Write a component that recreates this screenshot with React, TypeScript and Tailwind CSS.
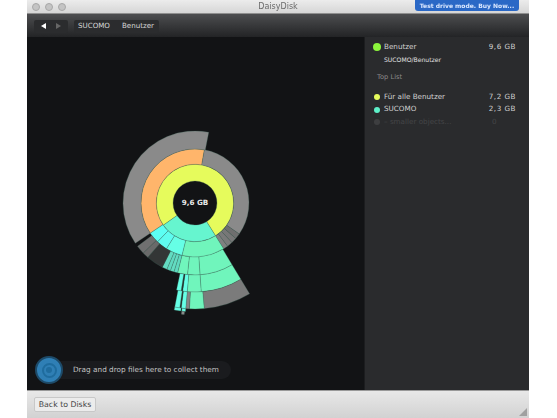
const GRAY = "#8a8a8a";
const TEAL = "#70f5bc";
const CYAN = "#66ffe6";

// clockwise degrees from 12 o'clock
function wedge(r0: number, r1: number, a0: number, a1: number) {
  const pt = (r: number, a: number) => {
    const t = (a * Math.PI) / 180;
    return `${(120 + r * Math.sin(t)).toFixed(2)} ${(120 - r * Math.cos(t)).toFixed(2)}`;
  };
  const large = a1 - a0 > 180 ? 1 : 0;
  return `M${pt(r0, a0)} A${r0} ${r0} 0 ${large} 1 ${pt(r0, a1)} L${pt(r1, a1)} A${r1} ${r1} 0 ${large} 0 ${pt(r1, a0)} Z`;
}

const sectors: [number, number, number, number, string][] = [
  // ring 1
  [22, 38.7, -125, 148, "#e6fb5c"],
  [22, 38.7, 148, 235, "#66f5cf"],
  // ring 2
  [38.7, 54, -124, 10, "#ffb56b"],
  [38.7, 54, 10, 125, GRAY],
  [38.7, 54, 125, 131, "#6f6f6f"],
  [38.7, 54, 131, 137, "#777777"],
  [38.7, 54, 137, 143, "#7a7a7a"],
  [38.7, 54, 143, 148, "#808080"],
  [38.7, 54, 148, 194, TEAL],
  [38.7, 54, 194, 212, CYAN],
  [38.7, 54, 212, 224, "#5ffcf0"],
  [38.7, 54, 224, 236, "#5cfff4"],
  // ring 3
  [54, 72, -124, 11, GRAY],
  [54, 72, 149, 176, TEAL],
  [54, 72, 176, 186, TEAL],
  [54, 72, 186, 194, TEAL],
  [54, 72, 194, 197, "#5fd9c0"],
  [54, 72, 197, 200, "#63dcc2"],
  [54, 72, 200, 203, "#5fd9c0"],
  [54, 72, 203, 207, "#63dcc2"],
  [54, 72, 207, 221, "#333636"],
  [54, 72, 221, 226, "#6a6a6a"],
  [54, 72, 226, 233, "#707070"],
  // ring 4
  [72, 89, 149, 176, TEAL],
  [72, 89, 176, 185, TEAL],
  [72, 89, 185, 188, CYAN],
  [72, 89, 188, 189, "#1e2a28"],
  [72, 89, 189, 192, CYAN],
  // ring 5
  [89, 106, 149, 175, "#7b7b7b"],
  [89, 106, 175, 183, TEAL],
  [89, 106, 183, 185, "#858585"],
  [89, 106, 185, 187.5, CYAN],
  [89, 106, 187.5, 188.3, "#1e2a28"],
  [89, 106, 188.3, 191, CYAN],
  // crumbs at the tip
  [106, 109, 185, 187, CYAN],
  [106, 109, 187.5, 191, CYAN],
  [109, 112, 185.5, 187, "#8a8a8a"],
];

function Row({ dot, name, size, big, dim }: { dot: string; name: string; size: string; big?: boolean; dim?: boolean }) {
  return (
    <div className={`flex h-[10px] items-center justify-between pr-[13px] ${dim ? "opacity-15" : ""}`}>
      <div className="flex items-center">
        <span
          className={`rounded-full ${big ? "w-[8px] h-[8px] mr-[3px]" : "w-[6px] h-[6px] ml-[1px] mr-[4px]"}`}
          style={{ backgroundColor: dot }}
        />
        <span>{name}</span>
      </div>
      <span className={`tracking-[0.5px] ${dim ? "mr-[19px]" : ""}`}>{size}</span>
    </div>
  );
}

export default function App() {
  return (
    <div className="h-[418px] w-[557px] bg-white overflow-hidden font-['DejaVu_Sans',sans-serif]">
      <div className="ml-[27px] w-[502px] h-full flex flex-col blur-[0.55px]">
        {/* title bar */}
        <div className="relative h-[14px] shrink-0 flex items-center justify-between bg-gradient-to-b from-[#ececec] to-[#d6d6d6] border-b border-[#8f8f8f]">
          <div className="flex gap-[5px] ml-[5px]">
            <span className="w-[8px] h-[8px] rounded-full bg-[#c4c4c4] border border-[#a8a8a8]" />
            <span className="w-[8px] h-[8px] rounded-full bg-[#c4c4c4] border border-[#a8a8a8]" />
            <span className="w-[8px] h-[8px] rounded-full bg-[#c4c4c4] border border-[#a8a8a8]" />
          </div>
          <span className="absolute inset-x-0 text-center text-[8px] leading-[13px] text-[#6a6a6a]">DaisyDisk</span>
          <button className="relative h-[11px] w-[104px] mr-[10px] mb-[3px] rounded-b-[3px] bg-[#2a68c6] text-[6px] leading-[11px] font-bold text-[#dbe8ff] whitespace-nowrap">
            Test drive mode. Buy Now...
          </button>
        </div>

        {/* toolbar */}
        <div className="h-[23px] shrink-0 flex items-center pl-[7px] pt-[1px] bg-gradient-to-b from-[#4d4e50] to-[#232426] text-[7.1px] text-[#d8d8d8]">
          <div className="flex items-center h-[13px] w-[34px] rounded-[2px] bg-[#2b2c2e]">
            <span className="ml-[7px] w-0 h-0 border-y-[3px] border-y-transparent border-r-[5px] border-r-white" />
            <span className="ml-[10px] w-0 h-0 border-y-[3px] border-y-transparent border-l-[5px] border-l-[#666]" />
          </div>
          <div className="flex items-center h-[13px] w-[85px] ml-[6px] pl-[4px] rounded-[2px] bg-[#2b2c2e]">
            <span>SUCOMO</span>
            <span className="ml-[12px]">Benutzer</span>
          </div>
        </div>

        <div className="flex-1 min-h-0 flex">
          {/* chart pane */}
          <div className="w-[337px] flex flex-col items-center bg-[#121315]">
            <div className="relative mt-[46px] -ml-[1px] w-[240px] h-[240px]">
              <svg viewBox="0 0 240 240" className="w-full h-full">
                {sectors.map(([r0, r1, a0, a1, fill], i) => (
                  <path key={i} d={wedge(r0, r1, a0, a1)} fill={fill} stroke="#3f6a5c" strokeOpacity="0.7" strokeWidth="0.4" />
                ))}
              </svg>
              <span className="absolute inset-0 flex items-center justify-center text-[7.2px] font-bold text-[#e8e8e8]">
                9,6 GB
              </span>
            </div>
            <div className="mt-auto mb-[6px] self-start ml-[8px] flex items-center">
              <div className="relative z-10 w-[28px] h-[28px] rounded-full bg-[#2f7fb5] flex items-center justify-center border-2 border-[#1d4a68]">
                <div className="w-[15px] h-[15px] rounded-full border-[2px] border-[#1f6c9e] flex items-center justify-center">
                  <div className="w-[6px] h-[6px] rounded-full bg-[#1f6c9e]" />
                </div>
              </div>
              <div className="-ml-[14px] h-[18px] w-[182px] pl-[24px] rounded-full bg-[#1a1b1e] text-[7.3px] leading-[18px] text-[#c4c4c4] whitespace-nowrap">
                Drag and drop files here to collect them
              </div>
            </div>
          </div>

          {/* side panel */}
          <div className="flex-1 bg-[#2a2b2d] pl-[8px] pt-[5px] text-[7.2px] text-[#d0d0d0] border-l border-[#1c1d1f]">
            <Row dot="#8cf53c" name="Benutzer" size="9,6 GB" big />
            <div className="ml-[11px] mt-[3px] h-[10px] leading-[10px] text-[6.1px] text-[#e0e0e0]">SUCOMO/Benutzer</div>
            <div className="ml-[4px] mt-[7px] h-[10px] leading-[10px] text-[6.7px] text-[#8a8a8a]">Top List</div>
            <div className="mt-[10px] flex flex-col gap-[2.5px]">
              <Row dot="#e6fb5c" name="Für alle Benutzer" size="7,2 GB" />
              <Row dot="#5ef0c8" name="SUCOMO" size="2,3 GB" />
              <Row dot="#aaaaaa" name="– smaller objects..." size="0" dim />
            </div>
          </div>
        </div>

        {/* bottom bar */}
        <div className="relative h-[28px] shrink-0 flex items-center pl-[7px] bg-gradient-to-b from-[#e8e8e8] to-[#d2d2d2] border-t border-[#999]">
          <button className="h-[15px] w-[62px] rounded-[2px] bg-[#ececec] border border-[#c8c8c8] text-[7.8px] text-[#444]">
            Back to Disks
          </button>
          <svg viewBox="0 0 8 8" className="absolute right-[2px] bottom-[2px] w-[8px] h-[8px]">
            <path d="M8 0 V8 H0 Z" fill="#a0a0a0" />
          </svg>
        </div>
      </div>
    </div>
  );
}
